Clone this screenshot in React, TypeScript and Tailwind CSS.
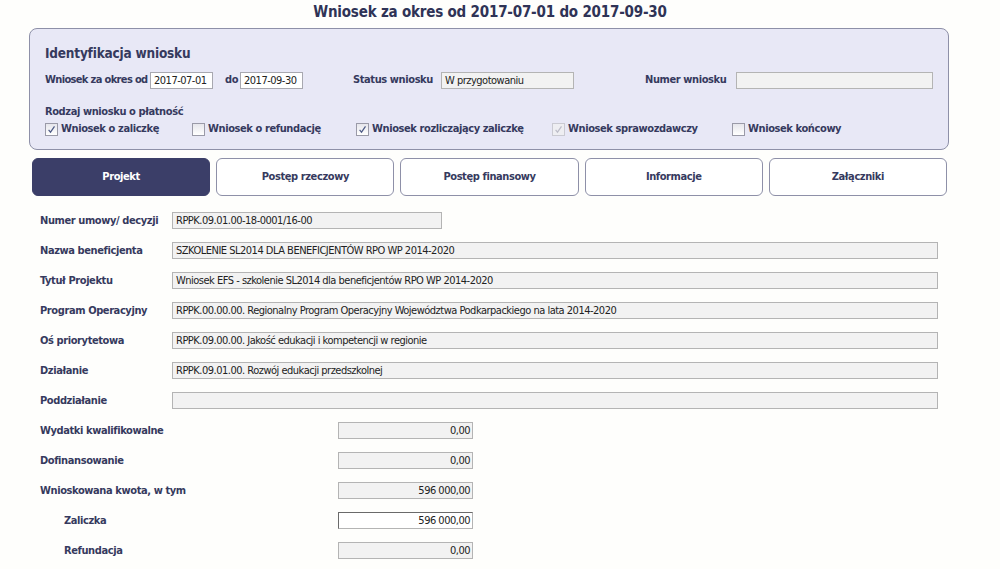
import React from "react";

const Check = ({ checked, disabled }: { checked?: boolean; disabled?: boolean }) => (
  <span
    className={`inline-flex shrink-0 items-center justify-center w-[13px] h-[13px] border mr-[3px] ${
      disabled ? "border-[#cacad2] bg-[#eeeef2]" : "border-[#9a9aa8] bg-gradient-to-b from-[#e6e6ec] to-[#ffffff]"
    }`}
  >
    {checked && (
      <svg width="9" height="9" viewBox="0 0 9 9">
        <path
          d="M1.6 4.9 L3.5 7.2 L7.5 1.3"
          fill="none"
          stroke={disabled ? "#bcbcc8" : "#4d5a86"}
          strokeWidth="1.2"
        />
      </svg>
    )}
  </span>
);

const val = "text-[#222] leading-none whitespace-nowrap tracking-[-0.5px]";

const Field = ({ label, value }: { label: string; value: string }) => (
  <div className="flex items-center h-[17px]">
    <div className="w-[132px] font-bold text-[#363a5e] leading-none whitespace-nowrap">{label}</div>
    <div className={`flex-1 h-[17px] border border-[#b4b4b4] bg-[#f2f2f2] pl-[3px] flex items-center ${val}`}>
      {value}
    </div>
  </div>
);

const Num = ({ label, value, indent, active }: { label: string; value: string; indent?: boolean; active?: boolean }) => (
  <div className="flex items-center h-[17px]">
    <div className={`w-[298px] font-bold text-[#363a5e] leading-none whitespace-nowrap ${indent ? "pl-[24px]" : ""}`}>{label}</div>
    <div
      className={`w-[135px] h-[17px] border flex items-center justify-end pr-[2px] ${val} ${
        active ? "border-[#b4b4b4] border-t-[#6a6a6a] border-l-[#6a6a6a] bg-white" : "border-[#b4b4b4] bg-[#f2f2f2]"
      }`}
    >
      {value}
    </div>
  </div>
);

export default function App() {
  return (
    <div
      className="w-[1000px] h-[569px] overflow-hidden bg-[#fefefc] text-[11px] tracking-[-0.4px]"
      style={{ fontFamily: '"DejaVu Sans Condensed", Tahoma, "DejaVu Sans", sans-serif' }}
    >
      <div className="h-[28px] flex justify-center items-start pt-[3px] pr-[20px]">
        <h1 className="text-[15px] font-bold text-[#2f3356] tracking-[-0.2px] leading-[18px]">
          Wniosek za okres od 2017-07-01 do 2017-09-30
        </h1>
      </div>

      <div className="ml-[29px] w-[920px] h-[122px] rounded-[8px] border border-[#8e90a8] bg-[#e8e8f6] pl-[15px] pt-[15px] text-[#363a5e]">
        <div className="font-bold text-[13.5px] tracking-[-0.2px] h-[18px] leading-[18px]">Identyfikacja wniosku</div>
        <div className="flex items-center h-[17px] mt-[10px] font-bold whitespace-nowrap">
          <span className="w-[105px] tracking-[-0.65px]">Wniosek za okres od</span>
          <span className={`w-[63px] h-[17px] border border-[#a8a8b0] bg-white font-normal pl-[3px] flex items-center ${val}`}>2017-07-01</span>
          <span className="ml-[12px] w-[15px]">do</span>
          <span className={`w-[63px] h-[17px] border border-[#a8a8b0] bg-white font-normal pl-[3px] flex items-center ${val}`}>2017-09-30</span>
          <span className="ml-[50px] w-[88px]">Status wniosku</span>
          <span className={`w-[133px] h-[17px] border border-[#b4b4b4] bg-[#f2f2f2] font-normal pl-[3px] flex items-center ${val}`}>W przygotowaniu</span>
          <span className="ml-[71px] w-[91px]">Numer wniosku</span>
          <span className="w-[197px] h-[17px] border border-[#b4b4b4] bg-[#f2f2f2]"></span>
        </div>
        <div className="font-bold mt-[16px] h-[14px] leading-[14px]">Rodzaj wniosku o płatność</div>
        <div className="flex items-center h-[16px] mt-[2px] font-bold whitespace-nowrap">
          <span className="w-[147px] flex items-center"><Check checked />Wniosek o zaliczkę</span>
          <span className="w-[164px] flex items-center"><Check />Wniosek o refundację</span>
          <span className="w-[196px] flex items-center"><Check checked />Wniosek rozliczający zaliczkę</span>
          <span className="w-[180px] flex items-center"><Check checked disabled />Wniosek sprawozdawczy</span>
          <span className="flex items-center"><Check />Wniosek końcowy</span>
        </div>
      </div>

      <div className="ml-[32px] w-[915px] mt-[8px] flex gap-[6px] h-[38px]">
        {["Projekt", "Postęp rzeczowy", "Postęp finansowy", "Informacje", "Załączniki"].map((t, i) => (
          <div
            key={t}
            className={`flex-1 rounded-[6px] flex items-center justify-center font-bold ${
              i === 0 ? "bg-[#3b3e68] text-white border border-[#3b3e68]" : "bg-white text-[#363a5e] border border-[#8e90a8]"
            }`}
          >
            {t}
          </div>
        ))}
      </div>

      <div className="ml-[40px] w-[898px] mt-[16px] flex flex-col">
        <div className="flex items-center h-[17px]">
          <div className="w-[132px] font-bold text-[#363a5e] leading-none whitespace-nowrap">Numer umowy/ decyzji</div>
          <div className={`w-[270px] h-[17px] border border-[#b4b4b4] bg-[#f2f2f2] pl-[3px] flex items-center ${val}`}>
            RPPK.09.01.00-18-0001/16-00
          </div>
        </div>
        <div className="flex flex-col gap-[13px] mt-[13px]">
          <Field label="Nazwa beneficjenta" value="SZKOLENIE SL2014 DLA BENEFICJENTÓW RPO WP 2014-2020" />
          <Field label="Tytuł Projektu" value="Wniosek EFS - szkolenie SL2014 dla beneficjentów RPO WP 2014-2020" />
          <Field label="Program Operacyjny" value="RPPK.00.00.00. Regionalny Program Operacyjny Województwa Podkarpackiego na lata 2014-2020" />
          <Field label="Oś priorytetowa" value="RPPK.09.00.00. Jakość edukacji i kompetencji w regionie" />
          <Field label="Działanie" value="RPPK.09.01.00. Rozwój edukacji przedszkolnej" />
          <Field label="Poddziałanie" value="" />
          <Num label="Wydatki kwalifikowalne" value="0,00" />
          <Num label="Dofinansowanie" value="0,00" />
          <Num label="Wnioskowana kwota, w tym" value="596 000,00" />
          <Num label="Zaliczka" value="596 000,00" indent active />
          <Num label="Refundacja" value="0,00" indent />
        </div>
      </div>
    </div>
  );
}
